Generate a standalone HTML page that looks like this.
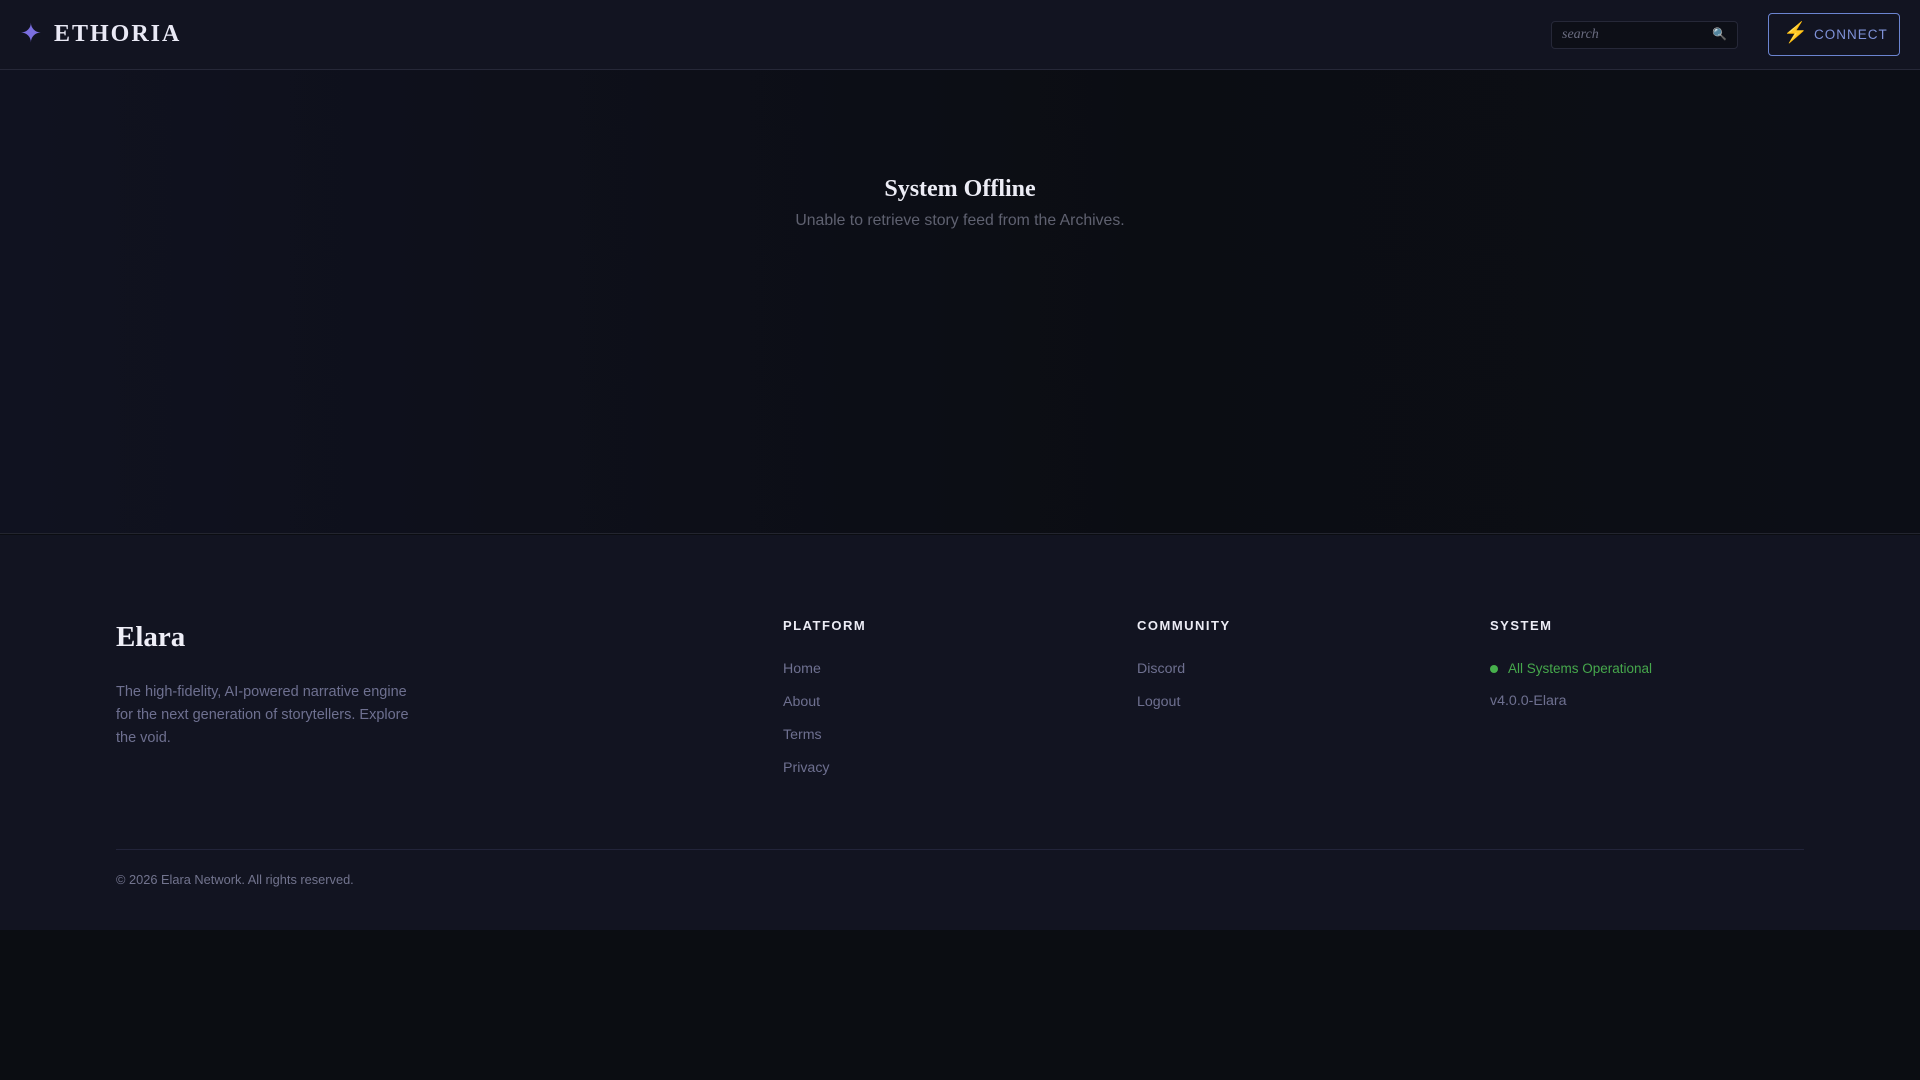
<!DOCTYPE html>
<html><head><meta charset="utf-8"><style>
*{margin:0;padding:0;box-sizing:border-box}
body{width:1920px;height:1080px;overflow:hidden;background:#0b0d12;font-family:"Liberation Sans",sans-serif;position:relative}
.hdr{position:absolute;left:0;top:0;width:1920px;height:70px;background:#121421;border-bottom:1px solid #262838;box-shadow:0 2px 4px rgba(0,0,0,.6)}
.star{position:absolute;left:20px;top:18px;font-size:26px;color:#7b6fe0;line-height:30px}
.logo{position:absolute;left:54px;top:19px;font-family:"Liberation Serif",serif;font-weight:bold;font-size:24px;letter-spacing:2px;color:#e9e9f5;line-height:30px}
.search{position:absolute;left:1551px;top:21px;width:187px;height:28px;background:#0d0f17;border:1px solid #262838;border-radius:4px}
.search span{position:absolute;left:10px;top:5px;font-family:"Liberation Serif",serif;font-style:italic;font-size:14px;color:#6a6c80}
.search i{position:absolute;right:10px;top:5px;font-style:normal;font-size:12px}
.btn{position:absolute;left:1768px;top:13px;width:132px;height:43px;border:1px solid #6b84d0;border-radius:4px;color:#7f92d8;font-size:13.5px;letter-spacing:1px;line-height:41px}
.btn b{position:absolute;left:14px;top:-1px;color:#f2a93a;font-size:20px;font-weight:normal}
.btn span{position:absolute;left:45px}
.main{position:absolute;left:0;top:70px;width:1920px;height:464px;background:linear-gradient(90deg,#101220,#0b0d13 60%,#0c0e16);border-bottom:1px solid #23252f}
.t1{position:absolute;left:0;width:1920px;text-align:center;font-family:"Liberation Serif",serif;font-weight:bold;font-size:24px;color:#ececf5}
.t2{position:absolute;left:0;width:1920px;text-align:center;font-size:15.8px;color:#5f6170}
.foot{position:absolute;left:0;top:535px;width:1920px;height:395px;background:#121421}
.el{position:absolute;left:116px;top:621px;font-family:"Liberation Serif",serif;font-weight:bold;font-size:29px;color:#efeff8}
.desc{position:absolute;left:116px;top:681px;width:310px;font-size:14.5px;line-height:23px;color:#6e7090}
.col{position:absolute;top:618px}
.col h4{font-size:13px;letter-spacing:1.5px;color:#ececf5;font-weight:bold;margin-bottom:28px}
.col a{display:block;font-size:14.2px;color:#6e7090;height:33px;text-decoration:none}
.ok{font-size:13.5px;color:#46a84c;margin-bottom:9px;position:relative;padding-left:18px;height:23px}
.ok:before{content:"";position:absolute;left:0;top:4px;width:8px;height:8px;border-radius:50%;background:#46b04c}
.hr{position:absolute;left:116px;top:849px;width:1688px;height:1px;background:#22243a}
.copy{position:absolute;left:116px;top:872px;font-size:12.8px;color:#72748e}
</style></head><body>
<div class="hdr"><div class="star">✦</div><div class="logo">ETHORIA</div>
<div class="search"><span>search</span><i>🔍</i></div>
<div class="btn"><b>⚡</b><span>CONNECT</span></div></div>
<div class="main"><div class="t1" style="top:106px">System Offline</div><div class="t2" style="top:142px">Unable to retrieve story feed from the Archives.</div></div>
<div class="foot"></div>
<div class="el">Elara</div>
<div class="desc">The high-fidelity, AI-powered narrative engine for the next generation of storytellers. Explore the void.</div>
<div class="col" style="left:783px"><h4>PLATFORM</h4><a>Home</a><a>About</a><a>Terms</a><a>Privacy</a></div>
<div class="col" style="left:1137px"><h4>COMMUNITY</h4><a>Discord</a><a>Logout</a></div>
<div class="col" style="left:1490px"><h4>SYSTEM</h4><div class="ok">All Systems Operational</div><a>v4.0.0-Elara</a></div>
<div class="hr"></div>
<div class="copy">© 2026 Elara Network. All rights reserved.</div>
</body></html>
